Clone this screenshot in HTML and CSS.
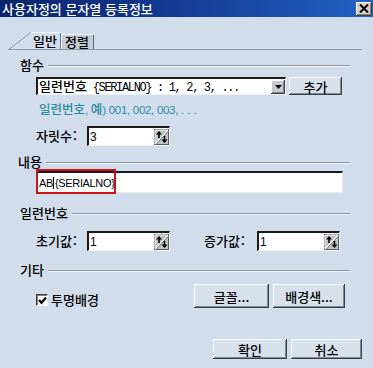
FILE: index.html
```html
<!DOCTYPE html>
<html lang="ko">
<head>
<meta charset="utf-8">
<link rel="stylesheet" href="styles.css">
</head>
<body>
<div class="window">
  <div class="titlebar">
    <span class="title">사용자정의 문자열 등록정보</span>
    <span class="close"><svg width="10" height="9" viewBox="0 0 10 9"><path d="M1 0.5 L9 8.5 M9 0.5 L1 8.5" stroke="#000" stroke-width="2"/></svg></span>
  </div>
  <div class="tabs">
    <div class="tab tab-active">
      <svg class="tab-shape" width="53" height="17" viewBox="0 0 53 17"><path d="M2 17.5 L24 0.5 L52.5 0.5 L52.5 17" fill="none" stroke="#fff" stroke-width="1"/><path d="M1 17.5 L23 0.5" fill="none" stroke="#7c8694" stroke-width="1"/><path d="M52.5 1 L52.5 17" stroke="#6c7480"/></svg>
      <span class="tab-label">일반</span>
    </div>
    <div class="tab tab-inactive">정렬</div>
  </div>

  <div class="group-head"><span>함수</span></div>
  <div class="func-row">
    <div class="combo">
      <span class="combo-text"><span class="ko">일련번호</span><span class="mono"> {SERIALNO} : 1, 2, 3, ...</span></span>
      <span class="combo-btn"><svg width="7" height="4" viewBox="0 0 7 4"><path d="M0 0 H7 L3.5 4 Z" fill="#000"/></svg></span>
    </div>
    <button class="btn btn-add">추가</button>
  </div>
  <div class="hint">일련번호<span class="lat">, </span>예<span class="lat">) 001, 002, 003, </span><span class="lat dots">...</span></div>
  <div class="field-row row-digits">
    <label class="field-label">자릿수<span class="colon">:</span></label>
    <div class="spin"><span class="spin-val">3</span>
      <svg class="spin-icon" width="15" height="16" viewBox="0 0 15 16"><rect x="0.5" y="0.5" width="14" height="15" fill="#bfc3c8" stroke="#5a5e64"/><path d="M1 1 H14 M1 1 V15" stroke="#fff"/><path d="M1.5 15 L14 1.5" stroke="#fff" stroke-width="1.2"/><path d="M2.5 15 L14 2.5" stroke="#6a6e74" stroke-width="1"/><path d="M5 3 V9" stroke="#000" stroke-width="1.6"/><path d="M2 5.5 L5 2 L8 5.5 Z" fill="#000"/><path d="M10.5 7 V13" stroke="#000" stroke-width="1.6"/><path d="M7.5 10.5 L10.5 14 L13.5 10.5 Z" fill="#000"/></svg>
    </div>
  </div>

  <div class="group-head head-content"><span>내용</span></div>
  <div class="text-input">
    <span class="ti-text">AB<span class="caret"></span>{SERIALNO}</span>
    <span class="mark"></span>
  </div>

  <div class="group-head head-serial"><span>일련번호</span></div>
  <div class="field-row row-serial">
    <label class="field-label">초기값<span class="colon">:</span></label>
    <div class="spin"><span class="spin-val">1</span>
      <svg class="spin-icon" width="15" height="16" viewBox="0 0 15 16"><rect x="0.5" y="0.5" width="14" height="15" fill="#bfc3c8" stroke="#5a5e64"/><path d="M1 1 H14 M1 1 V15" stroke="#fff"/><path d="M1.5 15 L14 1.5" stroke="#fff" stroke-width="1.2"/><path d="M2.5 15 L14 2.5" stroke="#6a6e74" stroke-width="1"/><path d="M5 3 V9" stroke="#000" stroke-width="1.6"/><path d="M2 5.5 L5 2 L8 5.5 Z" fill="#000"/><path d="M10.5 7 V13" stroke="#000" stroke-width="1.6"/><path d="M7.5 10.5 L10.5 14 L13.5 10.5 Z" fill="#000"/></svg>
    </div>
    <label class="field-label label-step">증가값<span class="colon">:</span></label>
    <div class="spin"><span class="spin-val">1</span>
      <svg class="spin-icon" width="15" height="16" viewBox="0 0 15 16"><rect x="0.5" y="0.5" width="14" height="15" fill="#bfc3c8" stroke="#5a5e64"/><path d="M1 1 H14 M1 1 V15" stroke="#fff"/><path d="M1.5 15 L14 1.5" stroke="#fff" stroke-width="1.2"/><path d="M2.5 15 L14 2.5" stroke="#6a6e74" stroke-width="1"/><path d="M5 3 V9" stroke="#000" stroke-width="1.6"/><path d="M2 5.5 L5 2 L8 5.5 Z" fill="#000"/><path d="M10.5 7 V13" stroke="#000" stroke-width="1.6"/><path d="M7.5 10.5 L10.5 14 L13.5 10.5 Z" fill="#000"/></svg>
    </div>
  </div>

  <div class="group-head head-misc"><span>기타</span></div>
  <div class="misc-row">
    <label class="check">
      <span class="checkbox"><svg width="9" height="9" viewBox="0 0 9 9"><path d="M1 4 L3.5 6.8 L8 1.5" fill="none" stroke="#000" stroke-width="2.2"/></svg></span>
      <span class="check-label">투명배경</span>
    </label>
    <button class="btn btn-font">글꼴...</button>
    <button class="btn btn-bg">배경색...</button>
  </div>

  <div class="footer">
    <button class="btn btn-ok">확인</button>
    <button class="btn btn-cancel">취소</button>
  </div>
</div>
</body>
</html>
```

FILE: styles.css
```css
html, body {
  margin: 0;
  padding: 0;
  background: #d2ddeb;
}

.window {
  width: 373px;
  height: 368px;
  overflow: hidden;
  background: #d2ddeb;
  font-family: "Noto Sans CJK KR", "Noto Sans", sans-serif;
  font-size: 13px;
  font-weight: 500;
  color: #000;
}

.titlebar {
  height: 17px;
  display: flex;
  align-items: center;
  justify-content: space-between;
  padding: 0 1px 0 2px;
  background: linear-gradient(90deg, #0a246a 0%, #153c96 50%, #2262c4 100%);
  color: #fff;
}

.title {
  font-size: 13px;
  line-height: 17px;
}

.close {
  width: 16px;
  height: 14px;
  background: #d4d0c8;
  box-shadow: inset -1px -1px #404040, inset 1px 1px #fff, inset -2px -2px #808080;
  display: flex;
  align-items: center;
  justify-content: center;
}

.close svg {
  display: block;
  margin: 0 1px 1px 0;
}

/* Tabs */
.tabs {
  margin: 15px 11px 0 8px;
  height: 17px;
  border-bottom: 1px solid #8c96a4;
  display: flex;
  align-items: flex-end;
}

.tab {
  box-sizing: border-box;
}

.tab-active {
  position: relative;
  width: 53px;
  height: 17px;
}

.tab-shape {
  position: absolute;
  left: 0;
  top: 0;
}

.tab-label {
  position: absolute;
  left: 25px;
  top: 0;
  line-height: 17px;
}

.tab-inactive {
  width: 33px;
  height: 15px;
  padding-left: 3px;
  line-height: 14px;
  background: #c3cbd6;
  border-top: 1px solid #f4f6f9;
  border-left: 1px solid #f4f6f9;
  border-right: 1px solid #5e6672;
  border-radius: 2px 2px 0 0;
}

/* Group headers */
.group-head {
  display: flex;
  align-items: center;
  height: 16px;
  margin: 7px 0 0 20px;
  width: 330px;
  line-height: 16px;
}

.group-head::after {
  content: "";
  flex: 1;
  margin: 2px 0 0 4px;
  border-top: 1px solid #8c96a4;
  border-bottom: 1px solid #f2f5f9;
}

.head-content {
  margin-top: 8px;
  margin-left: 18px;
  width: 332px;
}

.head-serial {
  margin-top: 12px;
}

.head-misc {
  margin-top: 11px;
}

/* Function row */
.func-row {
  display: flex;
  margin: 4px 0 0 36px;
  height: 18px;
}

.combo {
  box-sizing: border-box;
  width: 250px;
  height: 18px;
  background: #fff;
  border-top: 2px solid #1a1a1a;
  border-left: 2px solid #1a1a1a;
  border-right: 1px solid #f2f2f2;
  border-bottom: 1px solid #f2f2f2;
  display: flex;
  align-items: center;
  justify-content: space-between;
  padding-left: 1px;
}

.combo-text {
  white-space: nowrap;
  line-height: 15px;
}

.ko {
  font-size: 13px;
}

.mono {
  font-family: "Liberation Mono", monospace;
  font-weight: 400;
  font-size: 12px;
  letter-spacing: -1.35px;
  white-space: pre;
}

.combo-btn {
  width: 14px;
  height: 14px;
  box-sizing: border-box;
  background: #c8ccd2;
  box-shadow: inset -1px -1px #404040, inset 1px 1px #fff, inset -2px -2px #808080;
  display: flex;
  align-items: center;
  justify-content: center;
}

.btn {
  box-sizing: border-box;
  font-family: "Noto Sans CJK KR", sans-serif;
  font-weight: 500;
  font-size: 13px;
  color: #000;
  background: #d8e0ec;
  border: none;
  padding: 0;
  box-shadow: inset -1px -1px #3a3f46, inset 1px 1px #fbfcfe, inset -2px -2px #7f8896;
  display: flex;
  align-items: center;
  justify-content: center;
}

.btn-add {
  width: 53px;
  height: 18px;
  margin-left: 3px;
}

.hint {
  margin: 6px 0 0 39px;
  height: 16px;
  line-height: 16px;
  font-size: 12.5px;
  color: #2b8a9e;
  white-space: pre;
}

.lat {
  font-family: "Liberation Sans", sans-serif;
  font-weight: 400;
  font-size: 11.5px;
  letter-spacing: -0.3px;
}

.dots {
  letter-spacing: 3.2px;
}

/* Spinner fields */
.field-row {
  display: flex;
  align-items: center;
  margin-left: 36px;
  height: 20px;
}

.row-digits {
  margin-top: 9px;
}

.row-serial {
  margin-top: 10px;
}

.field-label {
  width: 51px;
  line-height: 20px;
}

.colon {
  margin-left: 1px;
}

.label-step {
  margin-left: 34px;
  width: 53px;
}

.spin {
  box-sizing: border-box;
  width: 83px;
  height: 20px;
  background: #fff;
  border-top: 2px solid #1a1a1a;
  border-left: 2px solid #1a1a1a;
  border-right: 1px solid #f2f2f2;
  border-bottom: 1px solid #f2f2f2;
  display: flex;
  align-items: center;
  justify-content: space-between;
  padding-left: 1px;
}

.spin-val {
  font-family: "Liberation Sans", sans-serif;
  font-weight: 400;
  font-size: 12px;
  line-height: 16px;
}

.spin-icon {
  display: block;
}

/* Content text input */
.text-input {
  position: relative;
  box-sizing: border-box;
  margin: 1px 0 0 36px;
  width: 307px;
  height: 22px;
  background: #fff;
  border-top: 2px solid #1a1a1a;
  border-left: 2px solid #1a1a1a;
  border-right: 1px solid #e8e8e8;
  border-bottom: 1px solid #e8e8e8;
  display: flex;
  align-items: center;
  padding-left: 1px;
}

.ti-text {
  font-family: "Liberation Sans", sans-serif;
  font-weight: 400;
  font-size: 11px;
  letter-spacing: -0.35px;
  display: flex;
  align-items: center;
}

.caret {
  display: inline-block;
  width: 1px;
  height: 12px;
  background: #000;
  margin: 0 0.5px;
}

.mark {
  position: absolute;
  left: -2px;
  top: -4px;
  width: 80px;
  height: 25px;
  box-sizing: border-box;
  border: 2px solid #c8141a;
}

/* Misc row */
.misc-row {
  display: flex;
  margin: 6px 0 0 36px;
  width: 309px;
  height: 24px;
}

.check {
  display: flex;
  align-items: center;
  align-self: flex-end;
  height: 14px;
  margin-bottom: 1px;
}

.checkbox {
  box-sizing: border-box;
  width: 12px;
  height: 12px;
  background: #fff;
  border-top: 1px solid #404040;
  border-left: 1px solid #404040;
  border-right: 1px solid #f4f4f4;
  border-bottom: 1px solid #f4f4f4;
  box-shadow: inset 1px 1px #808080;
  display: flex;
  align-items: center;
  justify-content: center;
}

.checkbox svg {
  display: block;
  margin: 1px 0 0 1px;
}

.check-label {
  margin-left: 3px;
  line-height: 14px;
}

.btn-font {
  margin-left: auto;
  width: 75px;
  height: 24px;
}

.btn-bg {
  margin-left: 4px;
  width: 72px;
  height: 24px;
}

/* Footer */
.footer {
  display: flex;
  justify-content: flex-end;
  margin: 31px 11px 0 0;
  gap: 4px;
}

.btn-ok {
  width: 74px;
  height: 20px;
}

.btn-cancel {
  width: 71px;
  height: 20px;
}
```
